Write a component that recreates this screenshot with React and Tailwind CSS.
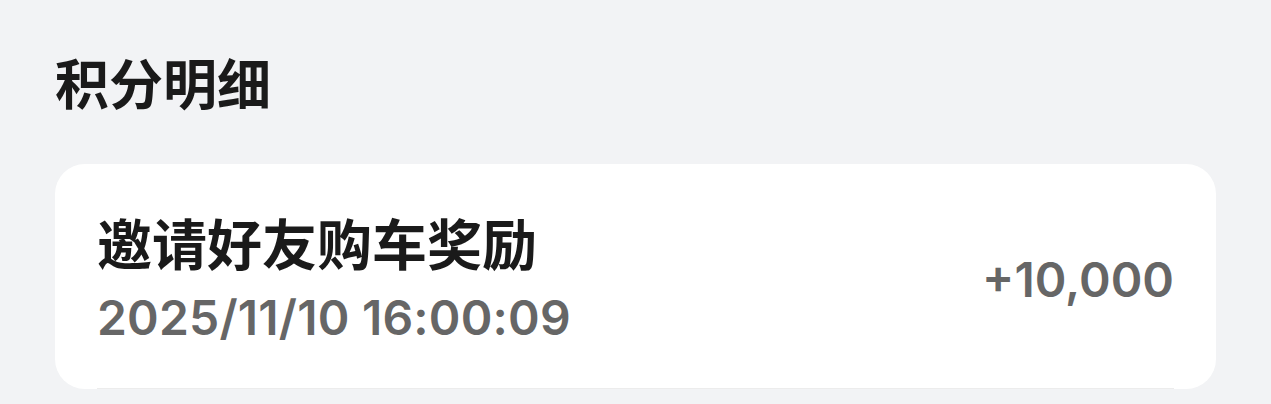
import React from 'react';

const records = [
    { title: '邀请好友购车奖励', time: '2025/11/10 16:00:09', points: '+10,000' },
];

export default function App() {
    return (
        <div className="min-h-screen bg-[#f2f3f5] px-[55px] pt-[48px] font-['Inter','Noto_Sans_CJK_SC',sans-serif]">
            {/* Header */}
            <h1 className="text-[54px] leading-[76px] font-bold text-[#1a1a1a]">积分明细</h1>

            {/* List */}
            <div className="mt-[40px] bg-white rounded-[30px] overflow-hidden">
                {records.map(r => (
                    <div key={r.time} className="mx-[42px] pt-[45px] pb-[38px] flex items-center justify-between border-b border-[#ececec]">
                        <div className="flex flex-col">
                            <span className="text-[55px] leading-[72px] font-bold text-[#1a1a1a]">{r.title}</span>
                            <span className="mt-[5px] text-[48px] leading-[64px] font-semibold text-[#666666] tracking-[0.2px]">{r.time}</span>
                        </div>
                        <span className="text-[48px] font-semibold text-[#666666]">{r.points}</span>
                    </div>
                ))}
            </div>
        </div>
    );
}
